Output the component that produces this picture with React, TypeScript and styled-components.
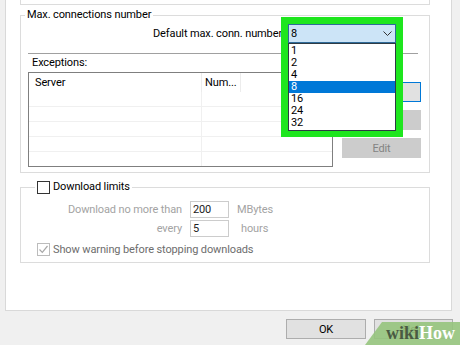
import React from "react";
import styled, { createGlobalStyle } from "styled-components";

const GlobalStyle = createGlobalStyle`
  html, body { margin: 0; padding: 0; background: #f0f0f0; }
  body {
    font-family: Roboto, "Liberation Sans", Arial, sans-serif;
    font-size: 11px;
    letter-spacing: -0.12px;
    color: #000;
  }
  #root { width: 460px; height: 345px; overflow: hidden; }
`;

const Page = styled.div`
  position: relative;
  width: 460px;
  height: 345px;
  overflow: hidden;
  display: flex;
  flex-direction: column;
  background: #f0f0f0;
`;

const Panel = styled.div`
  margin-left: 5px;
  width: 447px;
  height: 311px;
  box-sizing: border-box;
  background: #fff;
  border: 1px solid #d9d9d9;
  border-top: none;
  padding: 0 21px 0 14px;
  display: flex;
  flex-direction: column;
`;

const PrevGroupTail = styled.div`
  height: 5px;
  box-sizing: border-box;
  border: 1px solid #dcdcdc;
  border-top: none;
`;

const Group = styled.fieldset<{ $top: number }>`
  margin: ${(p) => p.$top}px 0 0;
  padding: 0;
  border: 1px solid #dcdcdc;
  min-width: 0;
`;

const Legend = styled.legend<{ $inset: number }>`
  margin-left: ${(p) => p.$inset}px;
  padding: 0 2px;
  height: 14px;
  line-height: 14px;
  display: flex;
  align-items: center;
  gap: 3px;
`;

const ConnRow = styled.div`
  display: flex;
  justify-content: flex-end;
  align-items: center;
  gap: 6px;
  margin-top: 2px;
  padding-right: 33px;
  height: 19px;
`;

const ComboAnchor = styled.div`
  position: relative;
  width: 108px;
  height: 19px;
`;

const Highlight = styled.div`
  position: absolute;
  left: -7px;
  top: -7px;
  right: -7px;
  height: 120px;
  background: #1ee61e;
  z-index: 1;
`;

const ComboBox = styled.div`
  position: relative;
  z-index: 2;
  box-sizing: border-box;
  height: 19px;
  border: 1px solid #2f6a99;
  background: #cce4f7;
  display: flex;
  align-items: center;
  justify-content: space-between;
  padding: 0 3px 0 2px;
`;

const DropList = styled.ul`
  position: absolute;
  z-index: 2;
  left: 0;
  right: 0;
  top: 19px;
  height: 88px;
  margin: 0;
  padding: 1px 0;
  list-style: none;
  box-sizing: border-box;
  border: 1px solid #2e3b44;
  background: #fff;
`;

const DropItem = styled.li<{ $selected?: boolean }>`
  height: 12px;
  line-height: 12px;
  padding-left: 2px;
  background: ${(p) => (p.$selected ? "#0078d7" : "transparent")};
  color: ${(p) => (p.$selected ? "#fff" : "#000")};
`;

const Separator = styled.div`
  margin: 10px 11px 0 7px;
  border-top: 1px solid #a0a0a0;
`;

const SectionLabel = styled.div`
  margin-top: 2px;
  padding-left: 11px;
  line-height: 14px;
`;

const ExceptionsRow = styled.div`
  display: flex;
  align-items: flex-start;
  gap: 9px;
  margin-top: 2px;
  padding: 0 0 5px 7px;
`;

const ListView = styled.div`
  width: 305px;
  height: 95px;
  box-sizing: border-box;
  border: 1px solid #7f7f7f;
  background: #fff;
  display: flex;
  flex-direction: column;
  overflow: hidden;
`;

const ListHeader = styled.div`
  display: flex;
  height: 19px;
  flex-shrink: 0;
`;

const ListRow = styled.div`
  display: flex;
  height: 15px;
  flex-shrink: 0;
  box-sizing: border-box;
  border-bottom: 1px solid #f0f0f0;
`;

const Cell = styled.div<{ $w?: number; $pad?: number; $line?: string }>`
  ${(p) => (p.$w ? `width: ${p.$w}px; flex-shrink: 0;` : "flex: 1;")}
  box-sizing: border-box;
  padding-left: ${(p) => p.$pad ?? 0}px;
  border-right: ${(p) => (p.$line ? `1px solid ${p.$line}` : "none")};
  display: flex;
  align-items: center;
  white-space: nowrap;
  overflow: hidden;
`;

const ButtonColumn = styled.div`
  display: flex;
  flex-direction: column;
  gap: 8px;
  margin-top: 10px;
  width: 79px;
`;

type Variant = "default" | "disabled" | "normal";

const PushButton = styled.button<{ $variant: Variant; $w?: number }>`
  width: ${(p) => (p.$w ? `${p.$w}px` : "100%")};
  height: 20px;
  box-sizing: border-box;
  padding: 0;
  font: inherit;
  letter-spacing: inherit;
  border: 1px solid
    ${(p) =>
      p.$variant === "default"
        ? "#0078d7"
        : p.$variant === "disabled"
        ? "#cccccc"
        : "#adadad"};
  background: ${(p) => (p.$variant === "disabled" ? "#cccccc" : "#e1e1e1")};
  color: ${(p) => (p.$variant === "disabled" ? "#838383" : "#000")};
`;

const LimitsGrid = styled.div`
  display: grid;
  grid-template-columns: 161px 39px auto;
  column-gap: 8px;
  row-gap: 2px;
  padding-top: 7px;
  align-items: center;
`;

const DimLabel = styled.span<{ $indent?: number }>`
  color: #a3a3a3;
  padding-left: ${(p) => p.$indent ?? 0}px;
`;

const RightLabel = styled(DimLabel)`
  text-align: right;
`;

const NumberInput = styled.div`
  height: 17px;
  box-sizing: border-box;
  border: 1px solid #cccccc;
  background: #fff;
  color: #222;
  padding-left: 2px;
  display: flex;
  align-items: center;
`;

const WarningRow = styled.div`
  display: flex;
  align-items: center;
  gap: 3px;
  margin-top: 6px;
  padding: 0 0 6px 16px;
  color: #6d6d6d;
`;

const Checkbox = styled.span<{ $disabled?: boolean }>`
  width: 13px;
  height: 13px;
  box-sizing: border-box;
  border: 1px solid ${(p) => (p.$disabled ? "#bcbcbc" : "#333")};
  background: #fff;
  display: inline-flex;
  align-items: center;
  justify-content: center;
  flex-shrink: 0;
`;

const ButtonBar = styled.div`
  display: flex;
  justify-content: flex-end;
  gap: 8px;
  padding: 8px 7px 0 0;
`;

const Watermark = styled.div`
  position: absolute;
  right: 0;
  bottom: 0;
  width: 95px;
  height: 23px;
  background: rgba(150, 196, 125, 0.9);
  clip-path: polygon(0 100%, 17px 0, 100% 0, 100% 100%);
  display: flex;
  align-items: center;
  justify-content: flex-end;
  padding-right: 5px;
  box-sizing: border-box;
  font-family: "Liberation Serif", "DejaVu Serif", serif;
  font-weight: bold;
  font-size: 18px;
  letter-spacing: 0;
  line-height: 23px;
`;

const WikiPart = styled.span`
  color: #4a5a42;
`;

const HowPart = styled.span`
  color: #ffffff;
`;

const options = ["1", "2", "4", "8", "16", "24", "32"];

const Chevron = () => (
  <svg width="9" height="5" viewBox="0 0 9 5">
    <path d="M0.5 0.5 L4.5 4.5 L8.5 0.5" fill="none" stroke="#333" strokeWidth="1" />
  </svg>
);

const Tick = () => (
  <svg width="11" height="11" viewBox="0 0 11 11">
    <path d="M1.5 5.5 L4.3 8.3 L9.5 2" fill="none" stroke="#a8a8a8" strokeWidth="1.2" />
  </svg>
);

export default function App() {
  const rows = [0, 1, 2, 3, 4];
  return (
    <>
      <GlobalStyle />
      <Page>
        <Panel>
          <PrevGroupTail />
          <Group $top={3}>
            <Legend $inset={4}>Max. connections number</Legend>
            <ConnRow>
              <span>Default max. conn. number</span>
              <ComboAnchor>
                <Highlight />
                <ComboBox>
                  <span>8</span>
                  <Chevron />
                </ComboBox>
                <DropList>
                  {options.map((o) => (
                    <DropItem key={o} $selected={o === "8"}>
                      {o}
                    </DropItem>
                  ))}
                </DropList>
              </ComboAnchor>
            </ConnRow>
            <Separator />
            <SectionLabel>Exceptions:</SectionLabel>
            <ExceptionsRow>
              <ListView>
                <ListHeader>
                  <Cell $w={173} $pad={6} $line="#ececec">Server</Cell>
                  <Cell $w={39} $pad={3} $line="#ececec">Num...</Cell>
                  <Cell />
                </ListHeader>
                {rows.map((r) => (
                  <ListRow key={r}>
                    <Cell $w={173} $line="#f0f0f0" />
                    <Cell $w={39} />
                    <Cell />
                  </ListRow>
                ))}
              </ListView>
              <ButtonColumn>
                <PushButton $variant="default">Add</PushButton>
                <PushButton $variant="disabled">Remove</PushButton>
                <PushButton $variant="disabled">Edit</PushButton>
              </ButtonColumn>
            </ExceptionsRow>
          </Group>
          <Group $top={7}>
            <Legend $inset={14}>
              <Checkbox />
              <span>Download limits</span>
            </Legend>
            <LimitsGrid>
              <RightLabel>Download no more than</RightLabel>
              <NumberInput>200</NumberInput>
              <DimLabel>MBytes</DimLabel>
              <RightLabel>every</RightLabel>
              <NumberInput>5</NumberInput>
              <DimLabel $indent={4}>hours</DimLabel>
            </LimitsGrid>
            <WarningRow>
              <Checkbox $disabled>
                <Tick />
              </Checkbox>
              <span>Show warning before stopping downloads</span>
            </WarningRow>
          </Group>
        </Panel>
        <ButtonBar>
          <PushButton $variant="normal" $w={80}>OK</PushButton>
          <PushButton $variant="normal" $w={79}>Help</PushButton>
        </ButtonBar>
        <Watermark>
          <WikiPart>wiki</WikiPart>
          <HowPart>How</HowPart>
        </Watermark>
      </Page>
    </>
  );
}
